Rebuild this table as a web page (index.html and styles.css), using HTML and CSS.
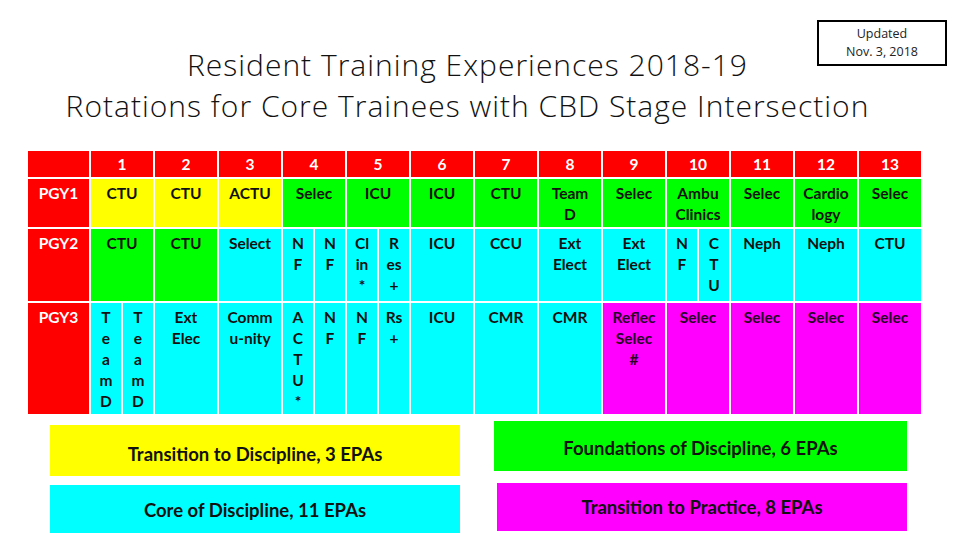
FILE: index.html
```html
<!DOCTYPE html>
<html>
<head>
<meta charset="utf-8">
<link rel="stylesheet" href="styles.css">
</head>
<body>
<div class="slide">
  <header class="top">
    <h1 class="title">Resident Training Experiences 2018-19<br>Rotations for Core Trainees with CBD Stage Intersection</h1>
    <div class="updated">Updated<br>Nov. 3, 2018</div>
  </header>

  <div class="grid">
    <div class="c red"></div>
    <div class="c red hd">1</div><div class="c red hd">2</div><div class="c red hd">3</div><div class="c red hd">4</div><div class="c red hd">5</div><div class="c red hd">6</div><div class="c red hd">7</div><div class="c red hd">8</div><div class="c red hd">9</div><div class="c red hd">10</div><div class="c red hd">11</div><div class="c red hd">12</div><div class="c red hd">13</div>

    <div class="c red lbl">PGY1</div>
    <div class="c yel">CTU</div>
    <div class="c yel">CTU</div>
    <div class="c yel">ACTU</div>
    <div class="c grn">Selec</div>
    <div class="c grn">ICU</div>
    <div class="c grn">ICU</div>
    <div class="c grn">CTU</div>
    <div class="c grn">Team<br>D</div>
    <div class="c grn">Selec</div>
    <div class="c grn">Ambu<br>Clinics</div>
    <div class="c grn">Selec</div>
    <div class="c grn">Cardio<br>logy</div>
    <div class="c grn">Selec</div>

    <div class="c red lbl">PGY2</div>
    <div class="c grn">CTU</div>
    <div class="c grn">CTU</div>
    <div class="c cyn">Select</div>
    <div class="split"><div class="c cyn">N<br>F</div><div class="c cyn">N<br>F</div></div>
    <div class="split"><div class="c cyn">Cl<br>in<br>*</div><div class="c cyn">R<br>es<br>+</div></div>
    <div class="c cyn">ICU</div>
    <div class="c cyn">CCU</div>
    <div class="c cyn">Ext<br>Elect</div>
    <div class="c cyn">Ext<br>Elect</div>
    <div class="split"><div class="c cyn">N<br>F</div><div class="c cyn">C<br>T<br>U</div></div>
    <div class="c cyn">Neph</div>
    <div class="c cyn">Neph</div>
    <div class="c cyn">CTU</div>

    <div class="c red lbl">PGY3</div>
    <div class="split"><div class="c cyn">T<br>e<br>a<br>m<br>D</div><div class="c cyn">T<br>e<br>a<br>m<br>D</div></div>
    <div class="c cyn">Ext<br>Elec</div>
    <div class="c cyn">Comm<br>u-nity</div>
    <div class="split"><div class="c cyn">A<br>C<br>T<br>U<br>*</div><div class="c cyn">N<br>F</div></div>
    <div class="split"><div class="c cyn">N<br>F</div><div class="c cyn">Rs<br>+</div></div>
    <div class="c cyn">ICU</div>
    <div class="c cyn">CMR</div>
    <div class="c cyn">CMR</div>
    <div class="c mag">Reflec<br>Selec<br>#</div>
    <div class="c mag">Selec</div>
    <div class="c mag">Selec</div>
    <div class="c mag">Selec</div>
    <div class="c mag">Selec</div>
  </div>

  <div class="legend">
    <div class="leg-col left">
      <div class="leg yel l1">Transition to Discipline, 3 EPAs</div>
      <div class="leg cyn l2">Core of Discipline, 11 EPAs</div>
    </div>
    <div class="leg-col right">
      <div class="leg grn r1">Foundations of Discipline, 6 EPAs</div>
      <div class="leg mag r2">Transition to Practice, 8 EPAs</div>
    </div>
  </div>
</div>
</body>
</html>
```

FILE: styles.css
```css
* { box-sizing: border-box; }
html, body { margin: 0; padding: 0; background: #fff; }
body { width: 960px; height: 540px; overflow: hidden; font-family: "Lato", "Open Sans", sans-serif; color: #111; }

.slide { width: 960px; height: 540px; display: flex; flex-direction: column; }

.top { position: relative; height: 151px; }
.title {
  margin: 0;
  padding-top: 44px;
  width: 935px;
  text-align: center;
  font-family: "Open Sans", sans-serif;
  font-weight: 300;
  font-size: 30px;
  letter-spacing: 1px;
  line-height: 41px;
  color: #111;
}
.updated {
  position: absolute;
  left: 817px; top: 20px;
  width: 130px; height: 46px;
  border: 2.5px solid #000;
  font-family: "Open Sans", sans-serif;
  font-size: 12.5px;
  line-height: 18px;
  text-align: center;
  padding-top: 3px;
  color: #222;
}

.grid {
  margin-left: 28px;
  display: grid;
  grid-template-columns: 61px repeat(13, 62px);
  grid-template-rows: 26px 48px 72px 111px;
  column-gap: 2px;
  row-gap: 2px;
  width: 895px;
}
.c {
  text-align: center;
  font-weight: 700;
  font-size: 15.5px;
  line-height: 21px;
  padding-top: 4px;
  color: #111;
}
.red { background: #ff0000; color: #fff; }
.hd { padding-top: 3px; font-size: 15.5px; }
.lbl { padding-top: 4px; }
.yel { background: #ffff00; }
.grn { background: #00ff00; }
.cyn { background: #00ffff; }
.mag { background: #ff00ff; color: #2a002a; }

.split { display: flex; gap: 2px; }
.split > .c { flex: 1; }

.legend { display: flex; margin-top: 10px; }
.leg-col { display: flex; flex-direction: column; }
.left { margin-left: 50px; width: 410px; }
.right { margin-left: 34px; width: 413px; }
.leg {
  display: flex; align-items: center; justify-content: center;
  font-weight: 700; font-size: 18.5px; color: #111;
}
.l1 { height: 51px; margin-top: 1px; padding-top: 6px; }
.l2 { height: 48px; margin-top: 9px; padding-top: 2px; }
.r1 { height: 50px; margin-top: -3px; padding-top: 3px; }
.r2 { height: 48px; margin-top: 12px; margin-left: 3px; }
```
